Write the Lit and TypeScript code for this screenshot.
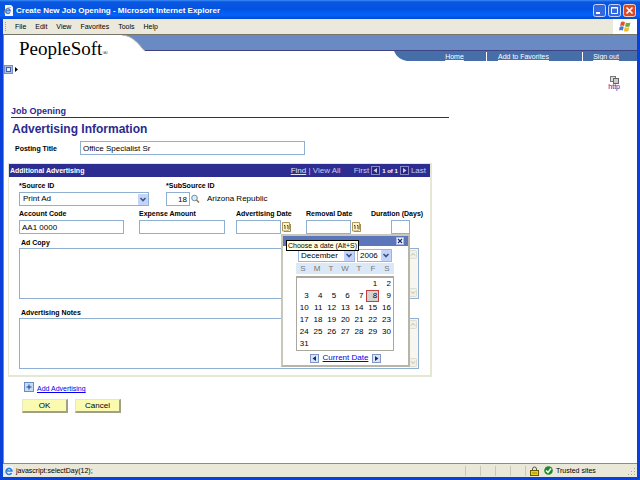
import { LitElement, html, css, svg, nothing } from "lit";
import { customElement } from "lit/decorators.js";
import { classMap } from "lit/directives/class-map.js";

const WEEKDAYS = ["S", "M", "T", "W", "T", "F", "S"];
const FIRST_WEEKDAY = 5;
const DAYS = 31;
const SELECTED = 8;

const chevron = html`<svg class="chevron" viewBox="0 0 10 11" aria-hidden="true">
  <rect width="10" height="11" rx="1" fill="#c3d3fb" />
  <path d="M2.5 4 L5 6.5 L7.5 4" fill="none" stroke="#40557c" stroke-width="1.6" />
</svg>`;

const calendarIcon = html`<svg width="9" height="10" viewBox="0 0 9 10" aria-hidden="true">
  <path d="M0.5 0.5 H7.5 V7 L5.5 9 H0.5 Z" fill="#fdf3c4" stroke="#b09a60" />
  <path d="M8.5 2 V9.5 H2" fill="none" stroke="#a58f58" />
  <path d="M2 3.5 H3 V7 M5 3.5 H6 V7" fill="none" stroke="#5a4a20" />
</svg>`;

const scrollArrow = (down: boolean) => html`<svg width="8" height="9" viewBox="0 0 8 9" aria-hidden="true">
  <rect x="0.5" y="0.5" width="7" height="8" rx="1" fill="#f1f0e8" stroke="#dddcd0" />
  ${down
    ? svg`<path d="M2 3.5 L4 5.5 L6 3.5" fill="none" stroke="#b9b8a8" />`
    : svg`<path d="M2 5.5 L4 3.5 L6 5.5" fill="none" stroke="#b9b8a8" />`}
</svg>`;

const arrowBox = (right: boolean, fg: string, bg: string, edge: string) => html`<svg
  width="9" height="9" viewBox="0 0 9 9" aria-hidden="true">
  <rect x="0.5" y="0.5" width="8" height="8" fill=${bg} stroke=${edge} />
  ${right ? svg`<path d="M3 2 L6.5 4.5 L3 7 Z" fill=${fg} />` : svg`<path d="M6 2 L2.5 4.5 L6 7 Z" fill=${fg} />`}
</svg>`;

@customElement("ps-calendar")
export class PsCalendar extends LitElement {
  static styles = css`
    :host {
      display: block;
      box-sizing: border-box;
      width: 129px;
      background: #fff;
      border: 2px solid #b8b5a8;
      border-left-color: #c9c6ba;
      border-top-color: #c9c6ba;
      font: 8px/10px "Liberation Sans", Arial, sans-serif;
      color: #000;
    }
    button, select { font: inherit; color: inherit; padding: 0; margin: 0; border: 0; background: none; }
    .bar { display: flex; justify-content: flex-end; align-items: center; height: 10px; padding: 0 4px; background: #5c77b9; }
    .close, .step { display: flex; }
    .selects { display: flex; gap: 2px; margin: 3px 0 1px 15px; }
    .combo { display: flex; align-items: center; box-sizing: border-box; height: 13px; border: 1px solid #9db6d6; background: #fff; }
    .month { width: 57px; }
    .year { width: 35px; }
    .combo select { appearance: none; flex: 1; min-width: 0; padding-left: 2px; }
    .chevron { width: 10px; height: 11px; flex: none; }
    table { border-collapse: collapse; table-layout: fixed; width: 98px; }
    th { height: 11px; padding: 0; background: #dbe8f8; color: #777; font-weight: 400; }
    .days { width: 98px; margin: 2px 0 0 13px; border: 1px solid #aaa89c; border-width: 2px 1px 1px 1px; box-sizing: border-box; }
    .days table { width: 96px; }
    .head { margin-left: 13px; }
    td { height: 12px; padding: 0; text-align: right; }
    .day { display: block; box-sizing: border-box; width: 100%; height: 12px; padding-right: 2px; text-align: right; font-size: 8px; }
    .picked { border: 1px solid #c04040; background: #d4d4d4; padding-right: 1px; }
    .foot { display: flex; justify-content: center; align-items: center; gap: 4px; height: 14px; }
    a { color: #0000ee; }
  `;

  render() {
    const cells: (number | null)[] = [
      ...Array(FIRST_WEEKDAY).fill(null),
      ...Array.from({ length: DAYS }, (_, i) => i + 1),
    ];
    const weeks = Array.from({ length: Math.ceil(cells.length / 7) }, (_, w) => cells.slice(w * 7, w * 7 + 7));
    return html`
      <div class="bar">
        <button class="close" aria-label="Close calendar">
          <svg width="8" height="8" viewBox="0 0 8 8">
            <rect x="0.5" y="0.5" width="7" height="7" fill="#f4f7fd" stroke="#a8b8e0" />
            <path d="M2 2 L6 6 M6 2 L2 6" stroke="#1c2870" stroke-width="1.2" />
          </svg>
        </button>
      </div>
      <div class="selects">
        <span class="combo month"><select aria-label="Month"><option>December</option></select>${chevron}</span>
        <span class="combo year"><select aria-label="Year"><option>2006</option></select>${chevron}</span>
      </div>
      <table class="head"><tr>${WEEKDAYS.map((d) => html`<th scope="col">${d}</th>`)}</tr></table>
      <div class="days">
        <table>
          ${weeks.map((week) => html`<tr>${Array.from({ length: 7 }, (_, i) => html`<td>${week[i]
            ? html`<button class=${classMap({ day: true, picked: week[i] === SELECTED })}>${week[i]}</button>`
            : nothing}</td>`)}</tr>`)}
        </table>
      </div>
      <div class="foot">
        <button class="step" aria-label="Previous month">${arrowBox(false, "#1c2870", "#dbe5f8", "#7f95c4")}</button>
        <a href="#today">Current Date</a>
        <button class="step" aria-label="Next month">${arrowBox(true, "#1c2870", "#dbe5f8", "#7f95c4")}</button>
      </div>
    `;
  }
}

@customElement("app-root")
export class AppRoot extends LitElement {
  static styles = css`
    :host {
      display: flex;
      flex-direction: column;
      box-sizing: border-box;
      min-height: 100vh;
      background: #fff;
      border: solid #0a3fd8;
      border-width: 0 3px 3px 3px;
      font: 8px/10px "Liberation Sans", Arial, sans-serif;
      color: #000;
    }
    button, input, select, textarea { font: inherit; color: inherit; margin: 0; box-sizing: border-box; border-radius: 0; }
    svg { display: block; flex: none; }
    .title {
      display: flex; align-items: center; gap: 3px; height: 19px; padding: 2px 4px 0 4px; box-sizing: border-box;
      margin: 0 -3px;
      background: linear-gradient(#3b8cf6 0, #0a57e0 2px, #0353e0 9px, #0463fb 15px, #0349d2 19px);
      color: #fff; font-weight: 700;
    }
    .caption { flex: 1; }
    .winbtns { display: flex; gap: 2px; }
    .winbtn { display: flex; padding: 0; border: 0; background: none; }
    .menu { display: flex; align-items: center; height: 15px; background: #ebe9dc; font-size: 7px; padding-left: 2px; }
    .grip { width: 1px; height: 9px; border-left: 1px dotted #a5a394; margin-right: 8px; }
    .items { display: flex; flex: 1; gap: 9px; }
    .items button { border: 0; background: none; padding: 0; }
    .flag { display: flex; align-items: center; justify-content: center; align-self: stretch; width: 24px; background: #fff; }
    .page { flex: 1; border-top: 1px solid #77756a; border-left: 1px solid #8c8a7e; }
    .masthead { display: flex; align-items: flex-start; height: 28px; }
    .brand { width: 118px; padding: 3px 0 0 15px; box-sizing: border-box; font: 19px/22px "Liberation Serif", "Times New Roman", serif; white-space: nowrap; }
    .brand sup { font-size: 7px; line-height: 7px; vertical-align: baseline; }
    .curve { margin-right: -1px; }
    .ribbon { flex: 1; }
    .band { height: 16px; background: #6a8ac3; border-bottom: 1px solid #3f4280; box-sizing: border-box; }
    .nav { display: flex; justify-content: flex-end; height: 10px; }
    .links { display: flex; width: 229px; background: #466ea9; line-height: 10px; font-size: 7px; }
    .links a { color: #fff; flex: none; box-sizing: border-box; text-align: center; border-left: 1px solid #fff; margin-top: 1px; }
    .links .home { width: 78px; padding-left: 15px; border-left: 0; }
    .fav { width: 96px; padding-right: 22px; }
    .out { width: 55px; padding-right: 8px; }
    .tail { margin-right: -1px; }
    .tools { display: flex; justify-content: space-between; align-items: flex-start; height: 41px; padding: 2px 17px 0 0; box-sizing: border-box; }
    .expander { display: flex; align-items: center; gap: 1px; padding: 0; border: 0; background: none; }
    .http { display: flex; flex-direction: column; align-items: center; margin-top: 11px; color: #2222b0; font-size: 7px; line-height: 5px; text-decoration: none; }
    .form { padding: 0 8px 0 4px; }
    .crumb { max-width: 438px; margin: 0 0 0 3px; height: 14px; box-sizing: border-box; border-bottom: 1px solid #2a2a90; color: #2a2a90; font: 700 9px/14px "Liberation Sans", Arial, sans-serif; }
    h1 { margin: 3px 0 0 4px; color: #2a2a90; font: 700 12px/16px "Liberation Sans", Arial, sans-serif; }
    label { font-weight: 700; font-size: 7px; line-height: 10px; white-space: nowrap; }
    .field { display: flex; flex-direction: column; flex: none; gap: 1px; }
    input { border: 1px solid #8fb0d0; background: #fff; height: 14px; padding: 0 2px; min-width: 0; }
    .posting { display: flex; align-items: center; margin: 4px 0 0 7px; }
    .posting label { width: 65px; margin-top: 2px; }
    .posting input { width: 225px; }
    .panel { max-width: 424px; box-sizing: border-box; margin-top: 8px; border: 1px solid #e6e6d4; border-bottom-width: 2px; border-right-width: 2px; }
    .panelbar { display: flex; align-items: center; height: 13px; background: #2d2d91; color: #c8c8ea; padding: 0 4px 0 1px; }
    .panelbar h2 { flex: 1; margin: 0; color: #fff; font: 700 7px/12px "Liberation Sans", Arial, sans-serif; }
    .panelbar a { color: #e0e0f4; }
    .pager { display: flex; align-items: center; gap: 2px; margin-left: 13px; }
    .pager b { color: #fff; font-size: 6px; }
    .pager button { display: flex; padding: 0; border: 0; background: none; }
    .inner { padding: 4px 11px 6px 10px; }
    .row { display: flex; align-items: flex-start; }
    .combo { display: flex; align-items: center; box-sizing: border-box; height: 14px; border: 1px solid #8fb0d0; }
    .combo select { appearance: none; flex: 1; border: 0; background: #fff; padding: 0 0 0 3px; min-width: 0; }
    .chevron { width: 10px; height: 11px; }
    .source { width: 130px; margin-right: 17px; }
    .sub { display: flex; align-items: center; }
    .sub input { width: 24px; text-align: right; }
    .sub button { display: flex; padding: 0; border: 0; background: none; }
    .sub output { margin-left: 7px; }
    .second { margin-top: 3px; }
    .account { width: 105px; margin-right: 15px; }
    .expense { width: 86px; margin-right: 11px; }
    .date { width: 55px; margin-right: 15px; position: relative; }
    .removal { margin-right: 10px; }
    .dur { width: 39px; }
    .dur input { width: 19px; align-self: flex-end; }
    .dates { display: flex; gap: 1px; align-items: center; }
    .dates input { width: 45px; }
    .dates button { display: flex; padding: 0; border: 0; background: none; }
    .notes { margin-top: 4px; gap: 0; }
    .notes label { padding-left: 2px; }
    .more { margin-top: 9px; }
    .area { display: flex; height: 51px; border: 1px solid #8fb0d0; box-sizing: border-box; }
    .area textarea { flex: 1; border: 0; padding: 1px 2px; resize: none; background: #fff; min-width: 0; }
    .scroll { display: flex; flex-direction: column; justify-content: space-between; padding: 1px; background: #f7f6f1; }
    ps-calendar { position: absolute; top: 25px; left: 45px; z-index: 1; }
    .tip { position: absolute; z-index: 2; top: 31px; left: 50px; padding: 0 1px; background: #ffffe1; border: 1px solid #000; line-height: 9px; white-space: nowrap; font-size: 7px; }
    .add { display: flex; align-items: center; gap: 3px; margin: 3px 0 0 16px; color: #0000ee; width: max-content; font-size: 7px; text-decoration: none; }
    .add span { text-decoration: underline; padding-top: 4px; }
    .actions { display: flex; gap: 7px; margin: 5px 0 8px 14px; }
    .actions button { width: 46px; height: 14px; padding: 0; background: #fafab0; border: solid; border-width: 1px 2px 2px 1px; border-color: #e8e8c0 #a09f88 #a09f88 #e8e8c0; }
    .status { display: flex; align-items: center; height: 14px; background: #e9e8d9; border-top: 1px solid #8e8c80; box-sizing: border-box; font-size: 7px; padding: 0 1px; gap: 2px; }
    .msg { flex: 1; }
    .slots { display: flex; gap: 14px; }
    .slots i { width: 1px; height: 10px; background: #c9c7b6; }
    .lock { margin: 0 3px 0 2px; }
    .zone { width: 71px; box-sizing: border-box; padding-left: 1px; }
  `;

  private dateField(id: string, label: string) {
    return html`<label for=${id}>${label}</label>
      <span class="dates"><input id=${id} /><button aria-label="Choose a date">${calendarIcon}</button></span>`;
  }

  private area(id: string, label: string, extra: string) {
    return html`<div class="field notes ${extra}">
      <label for=${id}>${label}</label>
      <div class="area"><textarea id=${id}></textarea>
        <span class="scroll">${scrollArrow(false)}${scrollArrow(true)}</span></div>
    </div>`;
  }

  render() {
    return html`
      <header class="title">
        <svg width="9" height="11" viewBox="0 0 9 11" aria-hidden="true">
          <path d="M1 0 H7 L9 2 V11 H1 Z" fill="#f4f6fb" />
          <path d="M5.8 7.4 A2.3 2.3 0 1 1 6.2 5.8 H2" fill="none" stroke="#2e6fd0" stroke-width="1.3" />
          <path d="M0.5 8.5 C0 5 4 1.5 7 2.5" fill="none" stroke="#d0a030" stroke-width="0.8" />
        </svg>
        <span class="caption">Create New Job Opening - Microsoft Internet Explorer</span>
        <span class="winbtns">
          <button class="winbtn" aria-label="Minimize"><svg width="13" height="13" viewBox="0 0 13 13">
            <rect x="0.5" y="0.5" width="12" height="12" rx="2" fill="#3468e0" stroke="#c4d4fa" /><path d="M3 9 H7" stroke="#fff" stroke-width="2" /></svg></button>
          <button class="winbtn" aria-label="Maximize"><svg width="13" height="13" viewBox="0 0 13 13">
            <rect x="0.5" y="0.5" width="12" height="12" rx="2" fill="#3468e0" stroke="#c4d4fa" /><path d="M3.5 3.5 H9.5 V9.5 H3.5 Z M3 4 H10" fill="none" stroke="#fff" /></svg></button>
          <button class="winbtn" aria-label="Close"><svg width="13" height="13" viewBox="0 0 13 13">
            <rect x="0.5" y="0.5" width="12" height="12" rx="2" fill="#dd4a26" stroke="#f4cfc4" /><path d="M3.5 3.5 L9.5 9.5 M9.5 3.5 L3.5 9.5" stroke="#fff" stroke-width="1.6" /></svg></button>
        </span>
      </header>
      <nav class="menu" aria-label="Menu bar">
        <span class="grip"></span>
        <span class="items">${["File", "Edit", "View", "Favorites", "Tools", "Help"].map((m) => html`<button>${m}</button>`)}</span>
        <span class="flag"><svg width="12" height="11" viewBox="0 0 12 11" aria-hidden="true">
          <path d="M2 1 Q4 0 6 1.2 L5 5 Q3 4 1 5 Z" fill="#e0562c" />
          <path d="M7 1.5 Q9 2.6 11.5 1.4 L10.5 5.4 Q8.5 6.4 6 5.3 Z" fill="#6cae3c" />
          <path d="M0.8 5.7 Q3 4.7 4.8 5.8 L3.8 9.6 Q2 8.6 0 9.5 Z" fill="#4478d4" />
          <path d="M5.8 6.1 Q8 7.2 10.3 6.2 L9.3 10 Q7 11 4.8 10 Z" fill="#f0bc30" />
        </svg></span>
      </nav>
      <main class="page">
        <div class="masthead">
          <div class="brand">PeopleSoft<sup>®</sup></div>
          <svg class="curve" width="24" height="17" viewBox="0 0 24 17" aria-hidden="true">
            <path d="M0 0 C12 1 17 10 23 16 H24 V0 Z" fill="#6a8ac3" />
            <path d="M0 0 C12 1 17 10 22 15.5 H24" fill="none" stroke="#b4b2a8" />
          </svg>
          <div class="ribbon">
            <div class="band"></div>
            <div class="nav">
              <svg class="tail" width="15" height="10" viewBox="0 0 15 10" aria-hidden="true"><path d="M0 0 H15 V10 H13 Q3 8 0 0 Z" fill="#466ea9" /></svg>
              <div class="links"><a class="home" href="#home">Home</a><a class="fav" href="#fav">Add to Favorites</a><a class="out" href="#out">Sign out</a></div>
            </div>
          </div>
        </div>
        <div class="tools">
          <button class="expander" aria-label="Expand menu">
            <svg width="14" height="10" viewBox="0 0 14 10">
              <rect x="0.5" y="0.5" width="8" height="8" fill="#a9bce4" stroke="#7890c4" />
              <rect x="2.5" y="2.5" width="4" height="4" fill="#e8eefa" stroke="#3f5fa8" />
              <path d="M11 2 L14 4.5 L11 7 Z" />
            </svg>
          </button>
          <a class="http" href="#http"><svg width="9" height="8" viewBox="0 0 9 8" aria-hidden="true">
            <rect x="0.5" y="0.5" width="5" height="5" fill="#ddd" stroke="#777" /><rect x="3.5" y="2.5" width="5" height="5" fill="#ccc" stroke="#666" /></svg>http</a>
        </div>
        <form class="form" @submit=${(e: Event) => e.preventDefault()}>
          <div class="crumb">Job Opening</div>
          <h1>Advertising Information</h1>
          <div class="posting"><label for="posting">Posting Title</label><input id="posting" value="Office Specialist Sr" /></div>
          <section class="panel">
            <div class="panelbar">
              <h2>Additional Advertising</h2>
              <a href="#find">Find</a>&nbsp;|&nbsp;<span>View All</span>
              <span class="pager"><span>First</span>
                <button aria-label="Previous">${arrowBox(false, "#c8c8ea", "#26267c", "#8888c8")}</button>
                <b>1 of 1</b>
                <button aria-label="Next">${arrowBox(true, "#c8c8ea", "#26267c", "#8888c8")}</button>
                <span>Last</span></span>
            </div>
            <div class="inner">
              <div class="row">
                <div class="field source"><label for="source">*Source ID</label>
                  <span class="combo"><select id="source"><option>Print Ad</option></select>${chevron}</span></div>
                <div class="field"><label for="sub">*SubSource ID</label>
                  <span class="sub"><input id="sub" value="18" />
                    <button aria-label="Look up"><svg width="10" height="10" viewBox="0 0 10 10">
                      <circle cx="4.5" cy="4" r="2.8" fill="#d6ecfa" stroke="#6b8cae" /><path d="M6.5 6 L9 8.5" stroke="#a07840" stroke-width="1.6" /></svg></button>
                    <output for="sub">Arizona Republic</output></span></div>
              </div>
              <div class="row second">
                <div class="field account"><label for="account">Account Code</label><input id="account" value="AA1 0000" /></div>
                <div class="field expense"><label for="expense">Expense Amount</label><input id="expense" /></div>
                <div class="field date">${this.dateField("ad-date", "Advertising Date")}
                  <ps-calendar></ps-calendar><span class="tip" role="tooltip">Choose a date (Alt+S)</span></div>
                <div class="field date removal">${this.dateField("rm-date", "Removal Date")}</div>
                <div class="field dur"><label for="dur">Duration (Days)</label><input id="dur" /></div>
              </div>
              ${this.area("copy", "Ad Copy", "")}
              ${this.area("notes", "Advertising Notes", "more")}
            </div>
          </section>
          <a class="add" href="#add"><svg width="10" height="10" viewBox="0 0 10 10" aria-hidden="true">
            <rect x="0.5" y="0.5" width="9" height="9" fill="#c4dcf4" stroke="#6a8cc0" /><path d="M2.5 5 H7.5 M5 2.5 V7.5" stroke="#1c3c90" /></svg><span>Add Advertising</span></a>
          <div class="actions"><button>OK</button><button>Cancel</button></div>
        </form>
      </main>
      <footer class="status">
        <svg width="10" height="10" viewBox="0 0 10 10" aria-hidden="true">
          <rect x="1" width="8" height="10" fill="#eef4fc" />
          <path d="M7.6 7 A3 3 0 1 1 8 5 H3" fill="none" stroke="#2e80dc" stroke-width="1.6" />
        </svg>
        <span class="msg">javascript:selectDay(12);</span>
        <span class="slots"><i></i><i></i><i></i><i></i><i></i></span>
        <svg class="lock" width="9" height="10" viewBox="0 0 9 10" aria-hidden="true">
          <path d="M2.5 5 V3 A2 2 0 0 1 6.5 3 V5" fill="none" stroke="#555" /><rect x="0.5" y="4.5" width="8" height="5" fill="#e8d020" stroke="#6a5a00" /><path d="M2 7 H7" stroke="#a08c10" />
        </svg>
        <svg width="9" height="9" viewBox="0 0 9 9" aria-hidden="true"><circle cx="4.5" cy="4.5" r="4.3" fill="#1e8a2c" /><path d="M2 4.5 L4 6.5 L7 2.5" fill="none" stroke="#fff" stroke-width="1.4" /></svg>
        <span class="zone">Trusted sites</span>
        <svg width="8" height="8" viewBox="0 0 8 8" aria-hidden="true"><path d="M6 1 h1 v1 h-1 z M3 4 h1 v1 h-1 z M6 4 h1 v1 h-1 z M0 7 h1 v1 h-1 z M3 7 h1 v1 h-1 z M6 7 h1 v1 h-1 z" fill="#a9a793" /></svg>
      </footer>
    `;
  }
}
